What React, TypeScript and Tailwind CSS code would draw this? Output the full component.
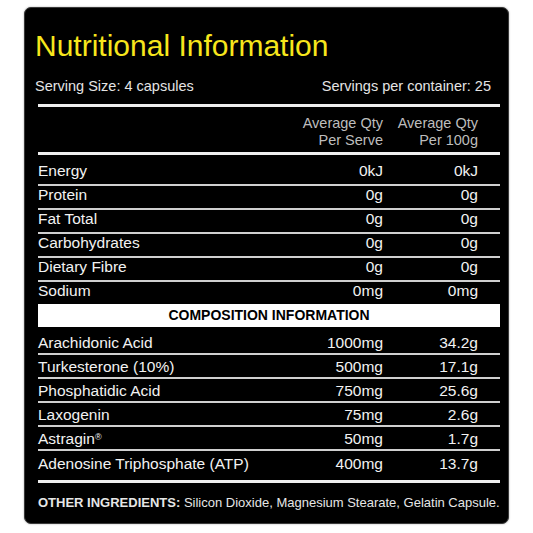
const nutrition = [
  { label: "Energy", serve: "0kJ", per100: "0kJ" },
  { label: "Protein", serve: "0g", per100: "0g" },
  { label: "Fat Total", serve: "0g", per100: "0g" },
  { label: "Carbohydrates", serve: "0g", per100: "0g" },
  { label: "Dietary Fibre", serve: "0g", per100: "0g" },
  { label: "Sodium", serve: "0mg", per100: "0mg" },
];

const composition = [
  { label: "Arachidonic Acid", serve: "1000mg", per100: "34.2g" },
  { label: "Turkesterone (10%)", serve: "500mg", per100: "17.1g" },
  { label: "Phosphatidic Acid", serve: "750mg", per100: "25.6g" },
  { label: "Laxogenin", serve: "75mg", per100: "2.6g" },
  { label: "Astragin", mark: true, serve: "50mg", per100: "1.7g" },
  { label: "Adenosine Triphosphate (ATP)", serve: "400mg", per100: "13.7g" },
];

export default function App() {
  return (
    <div
      className="min-h-[533px] w-[533px] bg-white pt-[7px] pl-[24px]"
      style={{ fontFamily: "'Liberation Sans', Arial, sans-serif" }}
    >
      <div className="h-[517px] w-[485px] rounded-[7px] border border-[#3a3a3a] bg-black pt-[21px] pl-[10px] pr-[8px] shadow-[0_0_2px_rgba(0,0,0,0.35)]">
        {/* Title */}
        <h1 className="text-[30px] leading-[34px] text-[#f7e61c]">
          Nutritional Information
        </h1>

        {/* Serving info */}
        <div className="mt-[15px] flex justify-between pr-[9px] text-[14.5px] leading-[17px] text-[#e4e4e4]">
          <span>Serving Size: 4 capsules</span>
          <span>Servings per container: 25</span>
        </div>

        <div className="ml-[3px]">
          <div className="mt-[9px] h-[3px] bg-[#efefef]" />

          {/* Column headers */}
          <div className="mt-[8px] grid grid-cols-[1fr_95px_95px] pr-[22px] text-[14.5px] leading-[16.5px] text-[#bdbdbd]">
            <div />
            <div className="whitespace-nowrap text-right">
              Average Qty
              <br />
              Per Serve
            </div>
            <div className="whitespace-nowrap text-right">
              Average Qty
              <br />
              Per 100g
            </div>
          </div>

          <div className="mt-[4px] h-[3px] bg-[#efefef]" />

          {/* Nutrition rows */}
          <div className="pt-[7px] text-[15.5px] leading-[18px] text-[#f2f2f2]">
            {nutrition.map((row, i) => (
              <div
                key={row.label}
                className={
                  i < nutrition.length - 1
                    ? "grid grid-cols-[1fr_95px_95px] border-b-2 border-[#cfcfcf] pr-[22px] pb-[4px]"
                    : "grid grid-cols-[1fr_95px_95px] pr-[22px] pb-[4px]"
                }
              >
                <span>{row.label}</span>
                <span className="text-right">{row.serve}</span>
                <span className="text-right">{row.per100}</span>
              </div>
            ))}
          </div>

          {/* Composition header */}
          <div className="h-[23px] bg-white text-center text-[14px] leading-[23px] font-bold text-black">
            COMPOSITION INFORMATION
          </div>

          {/* Composition rows */}
          <div className="pt-[4px] text-[15.5px] leading-[18px] text-[#f2f2f2]">
            {composition.map((row, i) => (
              <div
                key={row.label}
                className={
                  i < composition.length - 1
                    ? "grid grid-cols-[1fr_95px_95px] border-b-2 border-[#cfcfcf] pr-[22px] pt-[3px] pb-[1px]"
                    : "grid grid-cols-[1fr_95px_95px] pr-[22px] pt-[4px] pb-[7px]"
                }
              >
                <span>
                  {row.label}
                  {row.mark && (
                    <sup className="text-[9px] leading-none">®</sup>
                  )}
                </span>
                <span className="text-right">{row.serve}</span>
                <span className="text-right">{row.per100}</span>
              </div>
            ))}
          </div>

          <div className="h-[3px] bg-[#efefef]" />

          {/* Other ingredients */}
          <p className="mt-[12px] whitespace-nowrap text-[13px] leading-[16px] text-[#e6e6e6]">
            <span className="font-bold">OTHER INGREDIENTS:</span> Silicon
            Dioxide, Magnesium Stearate, Gelatin Capsule.
          </p>
        </div>
      </div>
    </div>
  );
}
